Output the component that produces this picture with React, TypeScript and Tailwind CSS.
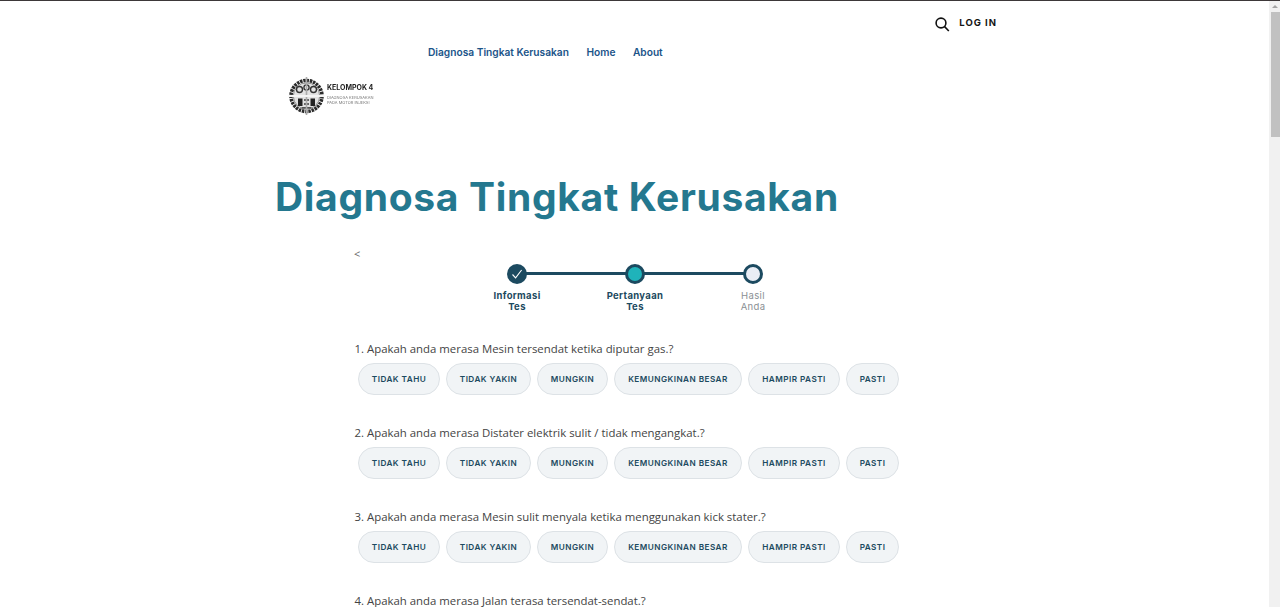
import React from "react";

const sans = "font-['Inter','Liberation_Sans',sans-serif]";
const options = ["TIDAK TAHU", "TIDAK YAKIN", "MUNGKIN", "KEMUNGKINAN BESAR", "HAMPIR PASTI", "PASTI"];
const optionWidths = ["w-[82px]", "w-[85px]", "w-[71px]", "w-[128px]", "w-[92px]", "w-[53px]"];
const questions = [
  "1. Apakah anda merasa Mesin tersendat ketika diputar gas.?",
  "2. Apakah anda merasa Distater elektrik sulit / tidak mengangkat.?",
  "3. Apakah anda merasa Mesin sulit menyala ketika menggunakan kick stater.?",
  "4. Apakah anda merasa Jalan terasa tersendat-sendat.?",
];

function Logo() {
  return (
    <div className="flex items-center gap-[2px] blur-[0.3px]">
      <svg width="37" height="38" viewBox="0 0 37 38">
        <circle cx="18.5" cy="19" r="15.5" fill="none" stroke="#2b2b2b" strokeWidth="3.6" strokeDasharray="2.5 0.8" />
        <circle cx="18.5" cy="19" r="13.2" fill="#e2e2e2" />
        <circle cx="18.5" cy="19" r="13.2" fill="none" stroke="#777" strokeWidth="0.8" />
        <circle cx="11.5" cy="12.5" r="3" fill="none" stroke="#333" strokeWidth="1.4" />
        <circle cx="25.5" cy="12.5" r="3" fill="none" stroke="#333" strokeWidth="1.4" />
        <circle cx="18.5" cy="10.5" r="2.6" fill="none" stroke="#333" strokeWidth="1.3" />
        <rect x="10" y="21.5" width="4.5" height="7.5" fill="#222" />
        <rect x="22.5" y="21.5" width="4.5" height="7.5" fill="#222" />
        <rect x="16" y="22" width="5" height="2" fill="#666" />
        <rect x="16" y="26" width="5" height="2" fill="#666" />
        <rect x="13.5" y="30" width="10" height="1.6" fill="#555" />
        <line x1="18.5" y1="0" x2="18.5" y2="38" stroke="#aaa" strokeWidth="1.6" />
        <line x1="0.5" y1="19" x2="36.5" y2="19" stroke="#f4f4f4" strokeWidth="1.8" />
      </svg>
      <div className="mb-[4px] flex flex-col">
        <span className={`${sans} mb-[3.5px] text-[7px] font-bold leading-[9px] text-[#222]`}>KELOMPOK 4</span>
        <span className={`${sans} text-[4px] leading-[5px] text-[#777]`}>DIAGNOSA KERUSAKAN</span>
        <span className={`${sans} text-[4px] leading-[5px] text-[#777]`}>PADA MOTOR INJEKSI</span>
      </div>
    </div>
  );
}

function Step({ label, sub, active, children }: { label: string; sub: string; active: boolean; children: React.ReactNode }) {
  return (
    <div className="flex w-[80px] flex-col items-center">
      {children}
      <div className={`${sans} mt-[6px] text-center text-[9.5px] leading-[11px] tracking-[0.35px] ${active ? "font-bold text-[#1c4a60]" : "font-normal text-[#8a8f94]"}`}>
        <div>{label}</div>
        <div>{sub}</div>
      </div>
    </div>
  );
}

export default function App() {
  return (
    <div className="flex h-[607px] w-full overflow-hidden border-t border-[#3d3839] bg-white">
      <main className="min-w-0 flex-1">
        <div className="flex justify-end gap-[9px] pr-[272px] pt-[15px]">
          <svg width="15" height="15" viewBox="0 0 15 15" fill="none" stroke="#111" strokeWidth="1.6" className="mt-[1px]">
            <circle cx="6" cy="6" r="4.9" />
            <line x1="9.6" y1="9.6" x2="13.8" y2="14" />
          </svg>
          <span className={`${sans} mt-[1px] text-[9.5px] font-bold leading-[12px] tracking-[1px] text-[#141414]`}>LOG IN</span>
        </div>
        <nav className={`${sans} ml-[428px] mt-[14px] flex gap-[17.5px] text-[10.2px] font-semibold leading-[13px] text-[#1b5489]`}>
          <span>Diagnosa Tingkat Kerusakan</span>
          <span>Home</span>
          <span>About</span>
        </nav>
        <div className="ml-[288px] mt-[18px]">
          <Logo />
        </div>
        <h1 className={`${sans} ml-[275px] mt-[58px] text-[39px] font-bold leading-[48px] tracking-[0.68px] text-[#24788f]`}>
          Diagnosa Tingkat Kerusakan
        </h1>
        <section className="ml-[354px] mt-[27px] w-[560px]">
          <div className="font-['Open_Sans',sans-serif] text-[11px] leading-[12px] text-[#666]">&lt;</div>
          <div className="relative ml-[123px] mt-[4px] flex w-[316px] justify-between">
            <div className="absolute left-[40px] right-[40px] top-[8px] h-[3px] bg-[#1c4a60]" />
            <Step label="Informasi" sub="Tes" active>
              <div className="z-10 flex h-[20px] w-[20px] items-center justify-center rounded-full bg-[#1c4a60]">
                <svg width="12" height="12" viewBox="0 0 12 12" fill="none" stroke="#fff" strokeWidth="1.1">
                  <path d="M1.5 6.5 L4.6 9.8 L10.6 2" />
                </svg>
              </div>
            </Step>
            <Step label="Pertanyaan" sub="Tes" active>
              <div className="z-10 h-[20px] w-[20px] rounded-full border-[3px] border-[#1c4a60] bg-[#1fb3ba]" />
            </Step>
            <Step label="Hasil" sub="Anda" active={false}>
              <div className="z-10 h-[20px] w-[20px] rounded-full border-[3px] border-[#1c4a60] bg-[#e9edf5]" />
            </Step>
          </div>
          <div className="mt-[29px] flex flex-col gap-[30px]">
            {questions.map((q) => (
              <div key={q}>
                <p className="pl-[0.5px] font-['Open_Sans',sans-serif] text-[11.4px] leading-[16px] text-[#444]">{q}</p>
                <div className="ml-[4px] mt-[6px] flex gap-[6px]">
                  {options.map((o, i) => (
                    <button
                      key={o}
                      className={`${sans} ${optionWidths[i]} h-[32px] shrink-0 rounded-[16px] border border-[#dde2e6] bg-[#f1f4f6] text-[8.2px] font-semibold tracking-[0.45px] text-[#1c4a60]`}
                    >
                      {o}
                    </button>
                  ))}
                </div>
              </div>
            ))}
          </div>
        </section>
      </main>
      <aside className="flex w-[11px] shrink-0 flex-col items-end bg-[#f1f1f1]">
        <div className="flex h-[11px] w-full items-center justify-center">
          <div className="h-0 w-0 border-x-[3px] border-b-[3px] border-x-transparent border-b-[#a3a3a3]" />
        </div>
        <div className="h-[125px] w-[9px] bg-[#c1c1c1]" />
      </aside>
    </div>
  );
}
